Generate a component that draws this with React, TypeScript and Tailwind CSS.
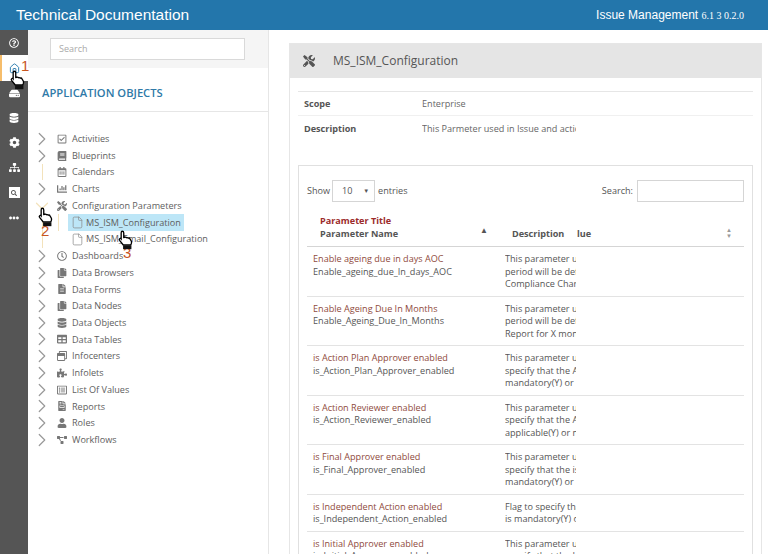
import React from "react";
import { ChevronDown, ChevronRight, File, Home } from "lucide-react";
import {
  FaBook,
  FaChartBar,
  FaCog,
  FaCopy,
  FaDatabase,
  FaEllipsisH,
  FaFileAlt,
  FaFileInvoice,
  FaHdd,
  FaProjectDiagram,
  FaPuzzlePiece,
  FaRegCalendarAlt,
  FaRegCheckSquare,
  FaRegClock,
  FaRegListAlt,
  FaRegQuestionCircle,
  FaRegWindowRestore,
  FaSearch,
  FaSitemap,
  FaTable,
  FaTools,
  FaUser,
} from "react-icons/fa";

const font = "font-['Open_Sans','Noto_Sans',sans-serif]";

function HandCursor() {
  return (
    <svg width="16" height="20" viewBox="0 0 19 24">
      <path
        d="M5 1.5c1.2 0 1.8.8 1.8 2V9l1.400-.3c.9-.2 1.600.1 2 .6.8-.3 1.600-.1 2 .5.9-.3 1.800.1 2.100.8l1.500 2.600c.5 1 .4 2.200 0 3.200l-.7 1.600H6.200L1.800 12.400c-.5-.7-.4-1.500.2-2 .6-.4 1.300-.3 1.700.2V3.500c0-1.200.5-2 1.300-2z"
        fill="#fff"
        stroke="#000"
        strokeWidth="1.600"
      />
      <rect x="6" y="18.500" width="10" height="4.500" fill="#111" />
    </svg>
  );
}

function Marker({ className, num, numClass }: { className: string; num: string; numClass: string }) {
  return (
    <div className={`absolute ${className}`}>
      <span className={`absolute font-['Liberation_Sans',sans-serif] text-[15px] leading-none text-[#c8561f] ${numClass}`}>
        {num}
      </span>
      <div className="relative">
        <HandCursor />
      </div>
    </div>
  );
}

const tree = [
  { label: "Activities", icon: FaRegCheckSquare, chevron: true },
  { label: "Blueprints", icon: FaBook, chevron: true },
  { label: "Calendars", icon: FaRegCalendarAlt, chevron: false },
  { label: "Charts", icon: FaChartBar, chevron: true },
  { label: "Configuration Parameters", icon: FaTools, chevron: false, open: true },
  { label: "Dashboards", icon: FaRegClock, chevron: true },
  { label: "Data Browsers", icon: FaCopy, chevron: true },
  { label: "Data Forms", icon: FaFileAlt, chevron: true },
  { label: "Data Nodes", icon: FaCopy, chevron: true },
  { label: "Data Objects", icon: FaDatabase, chevron: true },
  { label: "Data Tables", icon: FaTable, chevron: true },
  { label: "Infocenters", icon: FaRegWindowRestore, chevron: true },
  { label: "Infolets", icon: FaPuzzlePiece, chevron: true },
  { label: "List Of Values", icon: FaRegListAlt, chevron: true },
  { label: "Reports", icon: FaFileInvoice, chevron: true },
  { label: "Roles", icon: FaUser, chevron: true },
  { label: "Workflows", icon: FaProjectDiagram, chevron: true },
];

const rows = [
  {
    title: "Enable ageing due in days AOC",
    name: "Enable_ageing_due_In_days_AOC",
    desc: ["This parameter used", "period will be defined", "Compliance Chart"],
  },
  {
    title: "Enable Ageing Due In Months",
    name: "Enable_Ageing_Due_In_Months",
    desc: ["This parameter used", "period will be defined", "Report for X months"],
  },
  {
    title: "is Action Plan Approver enabled",
    name: "is_Action_Plan_Approver_enabled",
    desc: ["This parameter used", "specify that the Action", "mandatory(Y) or not"],
  },
  {
    title: "is Action Reviewer enabled",
    name: "is_Action_Reviewer_enabled",
    desc: ["This parameter used", "specify that the Action", "applicable(Y) or not"],
  },
  {
    title: "is Final Approver enabled",
    name: "is_Final_Approver_enabled",
    desc: ["This parameter used", "specify that the is Final", "mandatory(Y) or not"],
  },
  {
    title: "is Independent Action enabled",
    name: "is_Independent_Action_enabled",
    desc: ["Flag to specify that the", "is mandatory(Y) or not"],
  },
  {
    title: "is Initial Approver enabled",
    name: "is_Initial_Approver_enabled",
    desc: ["This parameter used", "specify that the Initial", "mandatory(Y) or not"],
  },
];

export default function App() {
  return (
    <div className={`relative flex h-[554px] w-[768px] flex-col overflow-hidden bg-white ${font}`}>
      <header className="flex h-[30px] shrink-0 items-center justify-between bg-[#2376ab] pl-[16px] pr-[24px] font-['Liberation_Sans',sans-serif] text-white">
        <span className="text-[15.500px]">Technical Documentation</span>
        <span className="text-[12px]">
          Issue Management <span className="font-['Liberation_Serif',serif] text-[10px]">6.1 3 0.2.0</span>
        </span>
      </header>

      <div className="flex min-h-0 flex-1">
        <nav className="flex w-[28px] shrink-0 flex-col items-center bg-[#555555] text-white">
          <div className="flex h-[25px] items-center">
            <FaRegQuestionCircle size={10} />
          </div>
          <div className="flex h-[26px] w-full items-center justify-center border-l-2 border-[#f6bd6b] bg-white pr-[2px] text-[#2376ab]">
            <Home size={11} />
          </div>
          <div className="flex h-[24px] items-center">
            <FaHdd size={11} />
          </div>
          <div className="flex h-[25px] items-center">
            <FaDatabase size={10} />
          </div>
          <div className="flex h-[25px] items-center">
            <FaCog size={11} />
          </div>
          <div className="flex h-[25px] items-center">
            <FaSitemap size={11} />
          </div>
          <div className="flex h-[25px] items-center">
            <span className="flex h-[11px] w-[11px] items-center justify-center bg-white text-[#555555]">
              <FaSearch size={6} />
            </span>
          </div>
          <div className="flex h-[25px] items-center">
            <FaEllipsisH size={10} />
          </div>
        </nav>

        <aside className="w-[241px] shrink-0 border-r border-[#e6e6e6]">
          <div className="flex h-[38px] items-center bg-[#f5f5f5] pl-[22px]">
            <div className="flex h-[22px] w-[195px] items-center border border-[#d9d9d9] bg-white pl-[8px] text-[9px] text-[#aaaaaa]">
              Search
            </div>
          </div>
          <div className="flex h-[44px] items-center border-b border-[#e6e6e6] pl-[14px] pt-[8px] text-[11.200px] font-semibold text-[#2f7aa8]">
            APPLICATION OBJECTS
          </div>
          <ul className="pl-[8px] pt-[18.500px] text-[9.100px] text-[#5e5e5e]">
            {tree.map((item) => (
              <React.Fragment key={item.label}>
                <li className="flex h-[16.720px] items-center">
                  <span className="flex w-[12px] shrink-0 justify-center text-[#999999]">
                    {item.chevron ? (
                      <ChevronRight size={22} strokeWidth={1.300} className="shrink-0" />
                    ) : item.open ? (
                      <ChevronDown size={22} strokeWidth={1.300} className="shrink-0 text-[#f3e2bb]" />
                    ) : (
                      <span className="h-[16px] w-px bg-[#f3e2bb]" />
                    )}
                  </span>
                  <span className="ml-[8px] flex w-[12px] shrink-0 justify-center text-[#777777]">
                    <item.icon size={10} />
                  </span>
                  <span className="ml-[4px] whitespace-nowrap">{item.label}</span>
                </li>
                {item.open && (
                  <>
                    <li className="flex h-[16.720px] items-center">
                      <span className="flex h-full w-[12px] shrink-0 justify-center">
                        <span className="h-full w-px bg-[#f3e2bb]" />
                      </span>
                      <span className="ml-[10px] h-full w-px bg-[#f3e2bb]" />
                      <div className="ml-[9px] flex h-full w-[116px] items-center bg-[#bde6f7] pl-[3px]">
                        <File size={13} strokeWidth={1.300} className="shrink-0 text-[#888888]" />
                        <span className="ml-[2px]">MS_ISM_Configuration</span>
                      </div>
                    </li>
                    <li className="flex h-[16.720px] items-center">
                      <span className="flex h-full w-[12px] shrink-0 justify-center">
                        <span className="h-full w-px bg-[#f3e2bb]" />
                      </span>
                      <div className="ml-[20px] flex h-full items-center pl-[3px]">
                        <File size={13} strokeWidth={1.300} className="shrink-0 text-[#888888]" />
                        <span className="ml-[2px]">MS_ISM_Email_Configuration</span>
                      </div>
                    </li>
                  </>
                )}
              </React.Fragment>
            ))}
          </ul>
        </aside>

        <main className="min-w-0 flex-1 pl-[20px] pr-[6px] pt-[13px] text-[#555555]">
          <div className="h-[600px] border border-[#e6e6e6]">
            <div className="flex h-[34px] items-center bg-[#e5e5e5] pl-[13px] text-[12px] text-[#555555]">
              <FaTools size={12} />
              <span className="ml-[18px]">MS_ISM_Configuration</span>
            </div>
            <div className="mx-[8px] mt-[13px] border-t border-[#e6e6e6] text-[9.100px]">
              <div className="flex h-[24px] items-center border-b border-[#f0f0f0] pl-[6px]">
                <span className="w-[118px] font-bold">Scope</span>
                <span className="text-[#666666]">Enterprise</span>
              </div>
              <div className="flex h-[24px] items-center pl-[6px] pt-px">
                <span className="w-[118px] font-bold">Description</span>
                <span className="w-[154px] overflow-hidden whitespace-nowrap text-[#666666]">
                  This Parmeter used in Issue and action
                </span>
              </div>
            </div>
            <div className="mx-[8px] mt-[25px] border border-[#e0e0e0] pl-[8px] pr-[8px] pt-[14px] text-[9.100px]">
              <div className="flex items-center justify-between">
                <div className="flex items-center">
                  <span>Show</span>
                  <div className="ml-[2px] flex h-[22px] w-[43px] items-center justify-between border border-[#d5d5d5] pl-[9px] pr-[5px]">
                    <span>10</span>
                    <span className="text-[6px]">▼</span>
                  </div>
                  <span className="ml-[3px]">entries</span>
                </div>
                <div className="flex items-center">
                  <span>Search:</span>
                  <div className="ml-[4px] h-[22px] w-[107px] border border-[#d5d5d5]" />
                </div>
              </div>

              <div className="mt-[9px] flex h-[36px] items-end border-b border-[#d5d5d5] pb-[6px] font-bold">
                <div className="relative w-[198px] pl-[13px] leading-[12.500px]">
                  <div className="text-[#9c2b2b]">Parameter Title</div>
                  <div>Parameter Name</div>
                  <span className="absolute right-[17px] top-[9px] text-[8px]">▲</span>
                </div>
                <div className="w-[65px] pl-[7px] leading-[12.500px]">Description</div>
                <div className="relative flex-1 pl-[7px] leading-[12.500px]">
                  lue
                  <span className="absolute right-[12px] -top-[1px] text-[6px] leading-[6px] text-[#999999]">
                    ▲<br />▼
                  </span>
                </div>
              </div>

              {rows.map((row) => (
                <div key={row.name} className="flex border-b border-[#e3e3e3] pb-[5px] pt-[6px] leading-[12.500px]">
                  <div className="w-[198px] pl-[6px]">
                    <div className="text-[#8f4a3c]">{row.title}</div>
                    <div>{row.name}</div>
                  </div>
                  <div className="w-[71px] overflow-hidden whitespace-nowrap">
                    {row.desc.map((line) => (
                      <div key={line}>{line}</div>
                    ))}
                  </div>
                </div>
              ))}
            </div>
          </div>
        </main>
      </div>

      <Marker className="left-[10px] top-[70px]" num="1" numClass="left-[11px] -top-[12px]" />
      <Marker className="left-[38px] top-[207px]" num="2" numClass="left-[3px] top-[16px]" />
      <Marker className="left-[118px] top-[230px]" num="3" numClass="left-[5px] top-[15px]" />
    </div>
  );
}
